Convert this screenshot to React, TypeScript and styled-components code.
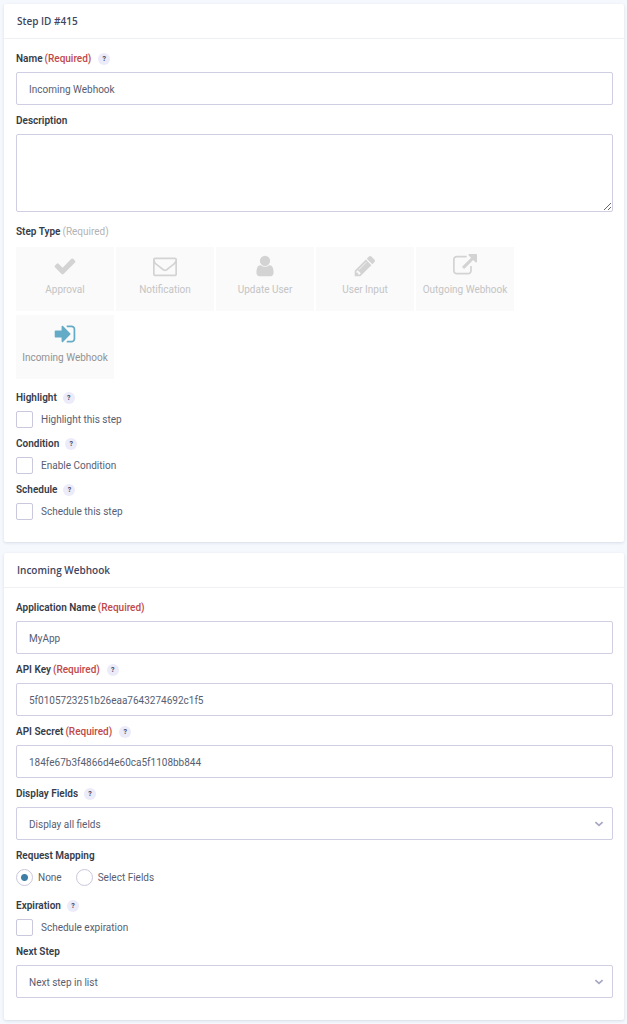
import React, { useId, useState } from "react";
import styled, { createGlobalStyle, css } from "styled-components";

const GlobalStyle = createGlobalStyle`
  *, *::before, *::after { box-sizing: border-box; }
  body {
    margin: 0;
    background: #f5f8fc;
    color: #585e71;
    font-family: Roboto, "Open Sans", sans-serif;
    font-size: 10px;
    line-height: 16px;
  }
  button, input, select, textarea { font: inherit; color: inherit; }
`;

const Page = styled.main`
  display: flex;
  flex-direction: column;
  gap: 11px;
  padding: 4px 3px 4px 4px;
`;

const Card = styled.section`
  background: #fff;
  border-radius: 2px;
  box-shadow: 0 1px 3px rgba(30, 50, 110, 0.14);
`;

const CardTitle = styled.h2`
  margin: 0;
  padding: 9px 13px;
  border-bottom: 1px solid #eff0f4;
  color: #3f4560;
  font-family: "Open Sans", sans-serif;
  font-size: 10px;
  font-weight: 600;
  line-height: 16px;
`;

const CardBody = styled.form`
  padding: 12px 11px 22px 12px;
`;

const Field = styled.div<{ $before?: number }>`
  margin-top: ${(p) => p.$before ?? 8}px;
  &:first-child { margin-top: 0; }
`;

const LabelRow = styled.div<{ $after?: number }>`
  display: flex;
  align-items: center;
  height: 16px;
  margin-bottom: ${(p) => p.$after ?? 5}px;
`;

const labelText = css`
  color: #363c48;
  font-size: 10px;
  font-weight: 600;
`;

const Label = styled.label`${labelText}`;
const GroupLabel = styled.span`${labelText}`;

const Required = styled.span<{ $muted?: boolean }>`
  margin-left: 2px;
  color: ${(p) => (p.$muted ? "#b3b3b3" : "#c0494a")};
  font-weight: ${(p) => (p.$muted ? 400 : 500)};
`;

const HelpButton = styled.button<{ $wide?: boolean }>`
  width: 12px;
  height: 12px;
  margin-left: ${(p) => (p.$wide ? 7 : 6)}px;
  padding: 0;
  border: 0;
  border-radius: 50%;
  background: #ecebf9;
  color: #3f4560;
  font-size: 7px;
  font-weight: 700;
  line-height: 12px;
  text-align: center;
`;

const control = css`
  display: block;
  width: 100%;
  border: 1px solid #cfcee2;
  border-radius: 2px;
  background: #fff;
  outline: 0;
`;

const TextInput = styled.input`
  ${control}
  height: 33px;
  padding: 2px 12px 0;
`;

const TextArea = styled.textarea`
  ${control}
  height: 78px;
  padding: 8px 12px;
  resize: vertical;
`;

const SelectWrap = styled.div`
  display: grid;
  align-items: center;
  > * { grid-area: 1 / 1; }
  > svg { justify-self: end; margin-right: 9px; pointer-events: none; }
`;

const Select = styled.select`
  ${control}
  height: 33px;
  padding: 2px 12px 0;
  appearance: none;
`;

const Tiles = styled.div`
  display: flex;
  flex-wrap: wrap;
  gap: 4px 2px;
`;

const Tile = styled.button<{ $active: boolean }>`
  display: flex;
  flex-direction: column;
  align-items: center;
  gap: 4px;
  width: 98px;
  height: 64px;
  padding: 7px 0 0;
  border: 0;
  background: #fafafa;
  color: ${(p) => (p.$active ? "#929292" : "#c4c4c4")};
  white-space: nowrap;
  svg { color: ${(p) => (p.$active ? "#64abc8" : "#d3d3d3")}; }
`;

const Options = styled.div`
  display: flex;
  gap: 14px;
`;

const Option = styled.label<{ $gap: number }>`
  display: flex;
  align-items: center;
  gap: ${(p) => p.$gap}px;
  height: 17px;
`;

const box = css`
  appearance: none;
  width: 17px;
  height: 17px;
  margin: 0;
  border: 1px solid #c9c8dd;
  background: #fff;
`;

const Checkbox = styled.input`
  ${box}
  border-radius: 2px;
  &:checked { background: #3e7da6; box-shadow: inset 0 0 0 3px #fff; }
`;

const Radio = styled.input`
  ${box}
  border-radius: 50%;
  &:checked { background: radial-gradient(circle, #3e7da6 3px, #fff 4px); }
`;

const paths = {
  check:
    "M1671 566q0 40-28 68l-724 724-136 136q-28 28-68 28t-68-28l-136-136-362-362q-28-28-28-68t28-68l136-136q28-28 68-28t68 28l294 295 656-657q28-28 68-28t68 28l136 136q28 28 28 68z",
  envelope:
    "M1664 1504v-768q-32 36-69 66-268 206-426 338-51 43-83 67t-86.5 48.5-102.5 24.5h-2q-48 0-102.5-24.5t-86.5-48.5-83-67q-158-132-426-338-37-30-69-66v768q0 13 9.5 22.5t22.5 9.5h1472q13 0 22.5-9.5t9.5-22.5zm0-1051v-24.5l-.5-13-3-12.5-5.5-9-9-7.5-14-2.5h-1472q-13 0-22.5 9.5t-9.5 22.5q0 168 147 284 193 152 401 317 6 5 35 29.5t46 37.5 44.5 31.5 50.5 27.5 43 9h2q20 0 43-9t50.5-27.5 44.5-31.5 46-37.5 35-29.5q208-165 401-317 54-43 100.5-115.5t46.5-131.5zm128-37v1088q0 66-47 113t-113 47h-1472q-66 0-113-47t-47-113v-1088q0-66 47-113t113-47h1472q66 0 113 47t47 113z",
  user:
    "M1536 1399q0 109-62.5 187t-150.5 78h-854q-88 0-150.5-78t-62.5-187q0-85 8.5-160.5t31.5-152 58.5-131 94-89 134.5-34.5q131 128 313 128t313-128q76 0 134.5 34.5t94 89 58.5 131 31.5 152 8.5 160.5zm-256-887q0 159-112.5 271.5t-271.5 112.5-271.5-112.5-112.5-271.5 112.5-271.5 271.5-112.5 271.5 112.5 112.5 271.5z",
  pencil:
    "M491 1536l91-91-235-235-91 91v107h128v128h107zm523-928q0-22-22-22-10 0-17 7l-542 542q-7 7-7 17 0 22 22 22 10 0 17-7l542-542q7-7 7-17zm-54-192l416 416-832 832h-416v-416zm683 96q0 53-37 90l-166 166-416-416 166-165q36-38 90-38 53 0 91 38l235 234q37 39 37 91z",
  external:
    "M1408 928v320q0 119-84.5 203.5t-203.5 84.5h-832q-119 0-203.5-84.5t-84.5-203.5v-832q0-119 84.5-203.5t203.5-84.5h704q14 0 23 9t9 23v64q0 14-9 23t-23 9h-704q-66 0-113 47t-47 113v832q0 66 47 113t113 47h832q66 0 113-47t47-113v-320q0-14 9-23t23-9h64q14 0 23 9t9 23zm384-864v512q0 26-19 45t-45 19-45-19l-176-176-652 652q-10 10-23 10t-23-10l-114-114q-10-10-10-23t10-23l652-652-176-176q-19-19-19-45t19-45 45-19h512q26 0 45 19t19 45z",
  signIn:
    "M1312 896q0 26-19 45l-544 544q-19 19-45 19t-45-19-19-45v-288h-448q-26 0-45-19t-19-45v-384q0-26 19-45t45-19h448v-288q0-26 19-45t45-19 45 19l544 544q19 19 19 45zm352-352v704q0 119-84.5 203.5t-203.5 84.5h-320q-13 0-22.5-9.5t-9.5-22.5q0-4-1-20t-.5-26.5 3-23.5 10-19.5 20.5-6.5h320q66 0 113-47t47-113v-704q0-66-47-113t-113-47h-312l-11.5-1-11.5-3-8-5.5-7-9-2-13.5q0-4-1-20t-.5-26.5 3-23.5 10-19.5 20.5-6.5h320q119 0 203.5 84.5t84.5 203.5z",
};

const stepTypes: { name: string; icon: keyof typeof paths }[] = [
  { name: "Approval", icon: "check" },
  { name: "Notification", icon: "envelope" },
  { name: "Update User", icon: "user" },
  { name: "User Input", icon: "pencil" },
  { name: "Outgoing Webhook", icon: "external" },
  { name: "Incoming Webhook", icon: "signIn" },
];

const Icon = ({ name }: { name: keyof typeof paths }) => (
  <svg width="24" height="24" viewBox="0 0 1792 1792" fill="currentColor" aria-hidden="true">
    <path d={paths[name]} />
  </svg>
);

const Chevron = () => (
  <svg width="10" height="6" viewBox="0 0 10 6" fill="none" stroke="#a9a8c6" strokeWidth="1.8" aria-hidden="true">
    <path d="M1.4 1.2L5 4.4l3.6-3.2" />
  </svg>
);

const Help = ({ topic, wide }: { topic: string; wide?: boolean }) => (
  <HelpButton type="button" $wide={wide} aria-label={`Help: ${topic}`}>?</HelpButton>
);

type FieldProps = { label: string; required?: boolean; help?: boolean };

function Heading({ id, label, required, help }: FieldProps & { id: string }) {
  return (
    <LabelRow>
      <Label htmlFor={id}>{label}</Label>
      {required && <Required>(Required)</Required>}
      {help && <Help topic={label} wide={required} />}
    </LabelRow>
  );
}

function TextField({ value, ...rest }: FieldProps & { value: string }) {
  const id = useId();
  return (
    <Field>
      <Heading id={id} {...rest} />
      <TextInput id={id} type="text" defaultValue={value} />
    </Field>
  );
}

function SelectField({ value, ...rest }: FieldProps & { value: string }) {
  const id = useId();
  return (
    <Field>
      <Heading id={id} {...rest} />
      <SelectWrap>
        <Select id={id}>
          <option>{value}</option>
        </Select>
        <Chevron />
      </SelectWrap>
    </Field>
  );
}

function CheckField({ label, text, before }: { label: string; text: string; before?: number }) {
  return (
    <Field $before={before} role="group" aria-label={label}>
      <LabelRow>
        <GroupLabel>{label}</GroupLabel>
        <Help topic={label} />
      </LabelRow>
      <Option $gap={8}>
        <Checkbox type="checkbox" />
        {text}
      </Option>
    </Field>
  );
}

export default function App() {
  const [stepType, setStepType] = useState("Incoming Webhook");
  return (
    <>
      <GlobalStyle />
      <Page>
        <Card>
          <CardTitle>Step ID #415</CardTitle>
          <CardBody>
            <TextField label="Name" required help value="Incoming Webhook" />
            <Field>
              <Heading id="description" label="Description" />
              <TextArea id="description" />
            </Field>
            <Field $before={12} role="group" aria-label="Step Type">
              <LabelRow $after={7}>
                <GroupLabel>Step Type</GroupLabel>
                <Required $muted>(Required)</Required>
              </LabelRow>
              <Tiles>
                {stepTypes.map((t) => (
                  <Tile
                    key={t.name}
                    type="button"
                    $active={t.name === stepType}
                    aria-pressed={t.name === stepType}
                    onClick={() => setStepType(t.name)}
                  >
                    <Icon name={t.icon} />
                    {t.name}
                  </Tile>
                ))}
              </Tiles>
            </Field>
            <CheckField before={11} label="Highlight" text="Highlight this step" />
            <CheckField label="Condition" text="Enable Condition" />
            <CheckField label="Schedule" text="Schedule this step" />
          </CardBody>
        </Card>

        <Card>
          <CardTitle>Incoming Webhook</CardTitle>
          <CardBody>
            <TextField label="Application Name" required value="MyApp" />
            <TextField label="API Key" required help value="5f0105723251b26eaa7643274692c1f5" />
            <TextField label="API Secret" required help value="184fe67b3f4866d4e60ca5f1108bb844" />
            <SelectField label="Display Fields" help value="Display all fields" />
            <Field role="radiogroup" aria-label="Request Mapping">
              <LabelRow>
                <GroupLabel>Request Mapping</GroupLabel>
              </LabelRow>
              <Options>
                <Option $gap={5}>
                  <Radio type="radio" name="mapping" defaultChecked />
                  None
                </Option>
                <Option $gap={5}>
                  <Radio type="radio" name="mapping" />
                  Select Fields
                </Option>
              </Options>
            </Field>
            <CheckField before={12} label="Expiration" text="Schedule expiration" />
            <SelectField label="Next Step" value="Next step in list" />
          </CardBody>
        </Card>
      </Page>
    </>
  );
}
